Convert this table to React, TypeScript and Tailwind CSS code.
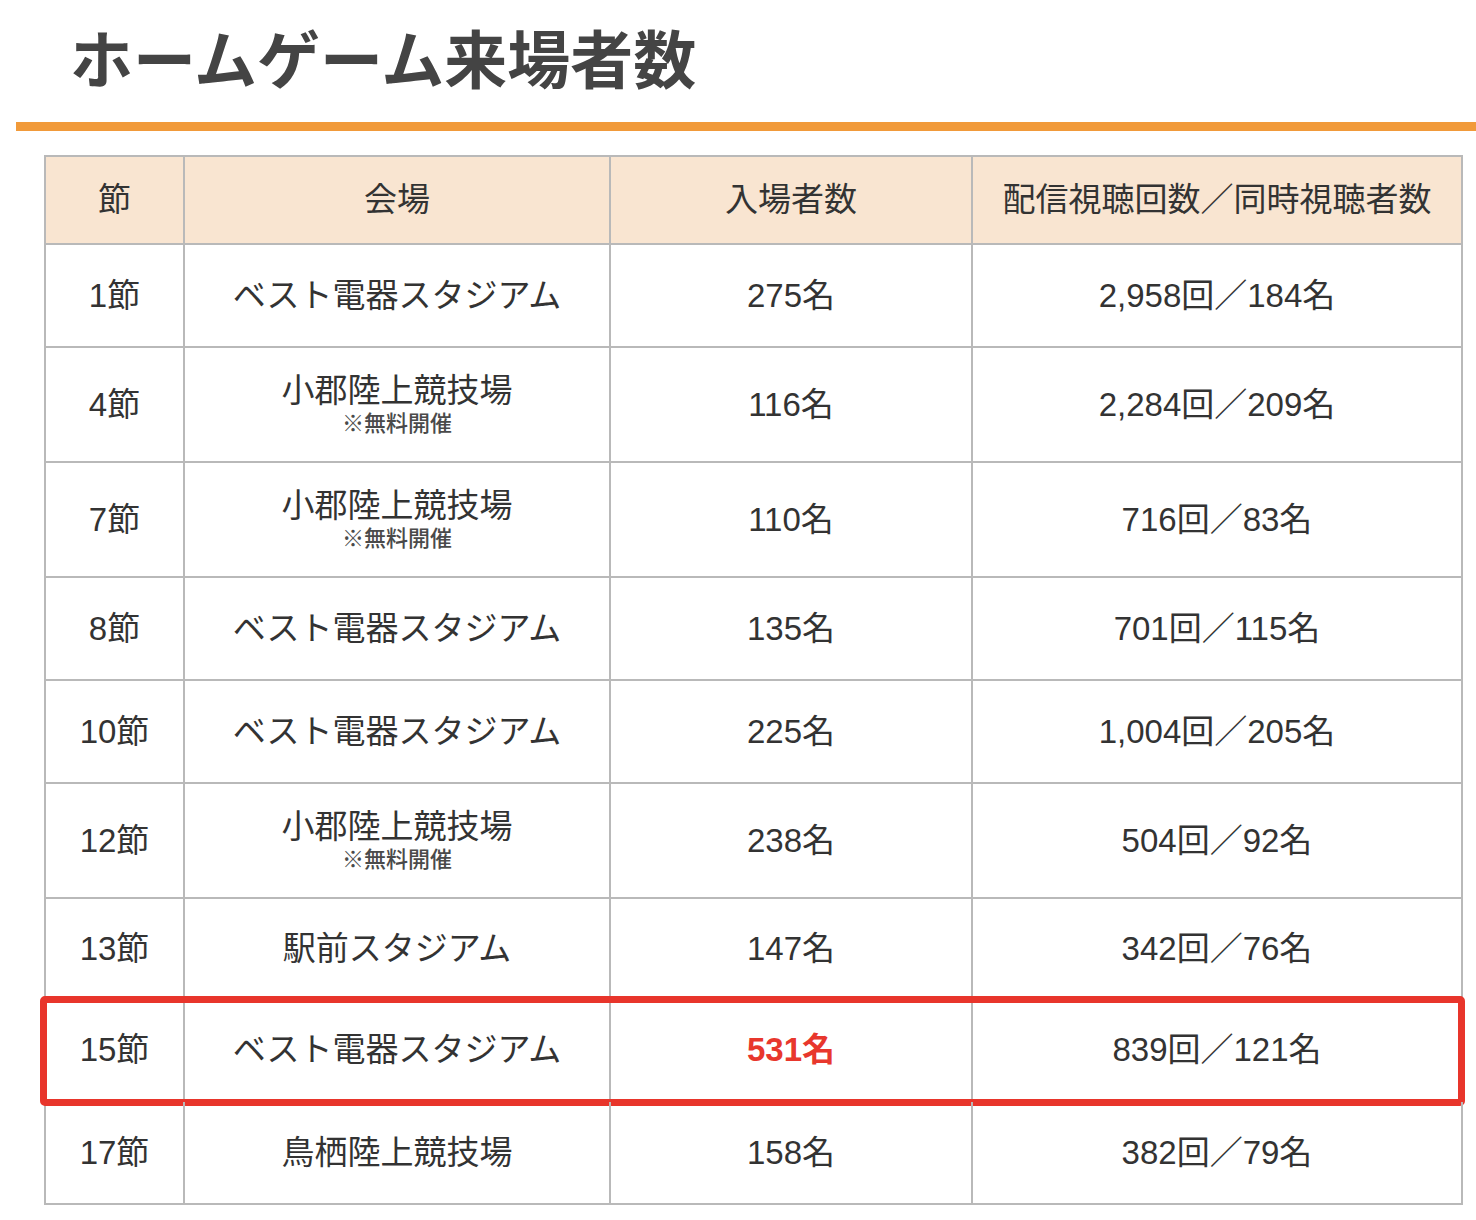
type Row = {
  round: string;
  venue: string;
  note?: string;
  attendance: string;
  stream: string;
  highlight?: boolean;
  h: string;
};

const rows: Row[] = [
  { round: "1節", venue: "ベスト電器スタジアム", attendance: "275名", stream: "2,958回／184名", h: "h-[103px]" },
  { round: "4節", venue: "小郡陸上競技場", note: "※無料開催", attendance: "116名", stream: "2,284回／209名", h: "h-[115px]" },
  { round: "7節", venue: "小郡陸上競技場", note: "※無料開催", attendance: "110名", stream: "716回／83名", h: "h-[115px]" },
  { round: "8節", venue: "ベスト電器スタジアム", attendance: "135名", stream: "701回／115名", h: "h-[103px]" },
  { round: "10節", venue: "ベスト電器スタジアム", attendance: "225名", stream: "1,004回／205名", h: "h-[103px]" },
  { round: "12節", venue: "小郡陸上競技場", note: "※無料開催", attendance: "238名", stream: "504回／92名", h: "h-[115px]" },
  { round: "13節", venue: "駅前スタジアム", attendance: "147名", stream: "342回／76名", h: "h-[101px]" },
  { round: "15節", venue: "ベスト電器スタジアム", attendance: "531名", stream: "839回／121名", h: "h-[102px]", highlight: true },
  { round: "17節", venue: "鳥栖陸上競技場", attendance: "158名", stream: "382回／79名", h: "h-[103px]" },
];

const cols = "grid grid-cols-[139px_426px_362px_490px]";
const cell = "flex flex-col items-center justify-center border-r-2 border-b-2 border-[#b9b9b9]";

export default function App() {
  return (
    <div className="w-[1476px] h-[1220px] overflow-hidden bg-white font-['Liberation_Sans','Noto_Sans_CJK_JP',sans-serif] text-[#333]">
      <h1 className="pl-[70px] pt-[24px] text-[63px] leading-none font-semibold text-[#444] font-['Noto_Sans_CJK_JP',sans-serif]">
        ホームゲーム来場者数
      </h1>
      <div className="ml-[16px] mt-[35px] h-[9px] bg-[#f19a3a]" />

      <div className="ml-[44px] mt-[24px] w-[1419px] border-l-2 border-t-2 border-[#b9b9b9] text-[33px]">
        <div className={`${cols} h-[88px] bg-[#f9e5d1]`}>
          <div className={cell}>節</div>
          <div className={cell}>会場</div>
          <div className={cell}>入場者数</div>
          <div className={cell}>配信視聴回数／同時視聴者数</div>
        </div>

        {rows.map((r) => (
          <div key={r.round} className={`${cols} ${r.h} relative`}>
            <div className={cell}>{r.round}</div>
            <div className={cell}>
              <span className="leading-[36px]">{r.venue}</span>
              {r.note && (
                <span className="pt-[2px] text-[22px] leading-[26px] font-medium text-[#4a4a4a]">{r.note}</span>
              )}
            </div>
            <div className={`${cell} ${r.highlight ? "font-bold text-[#e8372d]" : ""}`}>{r.attendance}</div>
            <div className={cell}>{r.stream}</div>
            {r.highlight && (
              <div className="absolute -left-[6px] -right-[2px] -top-[4px] -bottom-[4px] rounded-[5px] border-[7px] border-[#e8352b]" />
            )}
          </div>
        ))}
      </div>
    </div>
  );
}
